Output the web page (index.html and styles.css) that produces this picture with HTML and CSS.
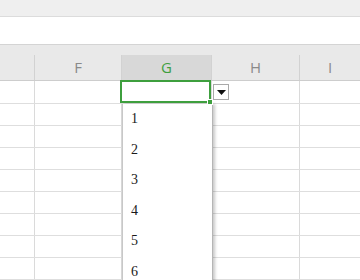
FILE: index.html
```html
<!DOCTYPE html>
<html>
<head>
<meta charset="utf-8">
<link rel="stylesheet" href="styles.css">
</head>
<body>
<div class="top"></div>
<div class="formula"></div>
<div class="gap"></div>
<div class="sheet">
  <div class="hrow">
    <div class="hc"></div>
    <div class="hc">F</div>
    <div class="hc sel">G</div>
    <div class="hc">H</div>
    <div class="hc">I</div>
  </div>
  <div class="row first">
    <div class="c"></div><div class="c"></div>
    <div class="c active">
      <div class="selbox"><span class="handle"></span></div>
      <div class="ddbtn"><svg width="9" height="5" viewBox="0 0 9 5"><path d="M0 0H9L4.5 5Z" fill="#111"/></svg></div>
      <ul class="list">
        <li>1</li><li>2</li><li>3</li><li>4</li><li>5</li><li>6</li>
      </ul>
    </div>
    <div class="c"></div><div class="c"></div>
  </div>
  <div class="row"><div class="c"></div><div class="c"></div><div class="c"></div><div class="c"></div><div class="c"></div></div>
  <div class="row"><div class="c"></div><div class="c"></div><div class="c"></div><div class="c"></div><div class="c"></div></div>
  <div class="row"><div class="c"></div><div class="c"></div><div class="c"></div><div class="c"></div><div class="c"></div></div>
  <div class="row"><div class="c"></div><div class="c"></div><div class="c"></div><div class="c"></div><div class="c"></div></div>
  <div class="row"><div class="c"></div><div class="c"></div><div class="c"></div><div class="c"></div><div class="c"></div></div>
  <div class="row"><div class="c"></div><div class="c"></div><div class="c"></div><div class="c"></div><div class="c"></div></div>
  <div class="row"><div class="c"></div><div class="c"></div><div class="c"></div><div class="c"></div><div class="c"></div></div>
  <div class="row"><div class="c"></div><div class="c"></div><div class="c"></div><div class="c"></div><div class="c"></div></div>
</div>
</body>
</html>
```
FILE: styles.css
```css
html, body {
  margin: 0;
  padding: 0;
  width: 360px;
  height: 280px;
  overflow: hidden;
  background: #fff;
}
.top {
  height: 16px;
  background: #efefef;
  border-bottom: 1px solid #dcdcdc;
}
.formula {
  height: 27px;
  background: #fff;
  border-bottom: 1px solid #d4d4d4;
}
.gap {
  height: 10px;
  background: #e9e9e9;
}
.sheet {
  display: flex;
  flex-direction: column;
  height: 225px;
  overflow: hidden;
}
.hrow, .row {
  display: grid;
  grid-template-columns: 35px 87px 90px 88px 1fr;
  flex: none;
}
.hrow {
  height: 25px;
  background: #e9e9e9;
  border-bottom: 1px solid #cdcdcd;
}
.hc {
  border-right: 1px solid #d2d2d2;
  display: flex;
  align-items: center;
  justify-content: center;
  font-family: "Open Sans", "Noto Sans", sans-serif;
  font-size: 15px;
  color: #8a8a8a;
  padding-bottom: 1px;
}
.hc:last-child { border-right: none; }
.hc.sel {
  background: #d8d8d8;
  color: #3f9f3f;
}
.row {
  height: 21px;
  border-bottom: 1px solid #dedede;
}
.row.first { height: 22px; }
.c {
  border-right: 1px solid #dadada;
}
.c:last-child { border-right: none; }
.c.active { position: relative; }
.selbox {
  position: absolute;
  left: -2px;
  top: -1px;
  width: 87px;
  height: 19px;
  border: 2px solid #3e9f3e;
  z-index: 3;
}
.handle {
  position: absolute;
  right: -4px;
  bottom: -4px;
  width: 4px;
  height: 4px;
  background: #3e9f3e;
  border: 1px solid #fff;
}
.ddbtn {
  position: absolute;
  left: 91px;
  top: 3px;
  width: 16px;
  height: 16px;
  background: #fff;
  border: 1px solid #a9a9a9;
  box-sizing: border-box;
  display: flex;
  align-items: center;
  justify-content: center;
  z-index: 4;
}
.list {
  position: absolute;
  left: 0;
  top: 23px;
  width: 89px;
  height: 200px;
  margin: 0;
  padding: 0;
  list-style: none;
  background: #fff;
  border-left: 1px solid #c8c8c8;
  border-right: 1px solid #b5b5b5;
  box-shadow: 2px 0 3px rgba(0,0,0,0.22);
  z-index: 2;
}
.list li {
  height: 30.6px;
  line-height: 30px;
  padding-left: 8px;
  font-family: "Liberation Serif", "DejaVu Serif", serif;
  font-size: 14px;
  color: #1a1a1a;
}
```
